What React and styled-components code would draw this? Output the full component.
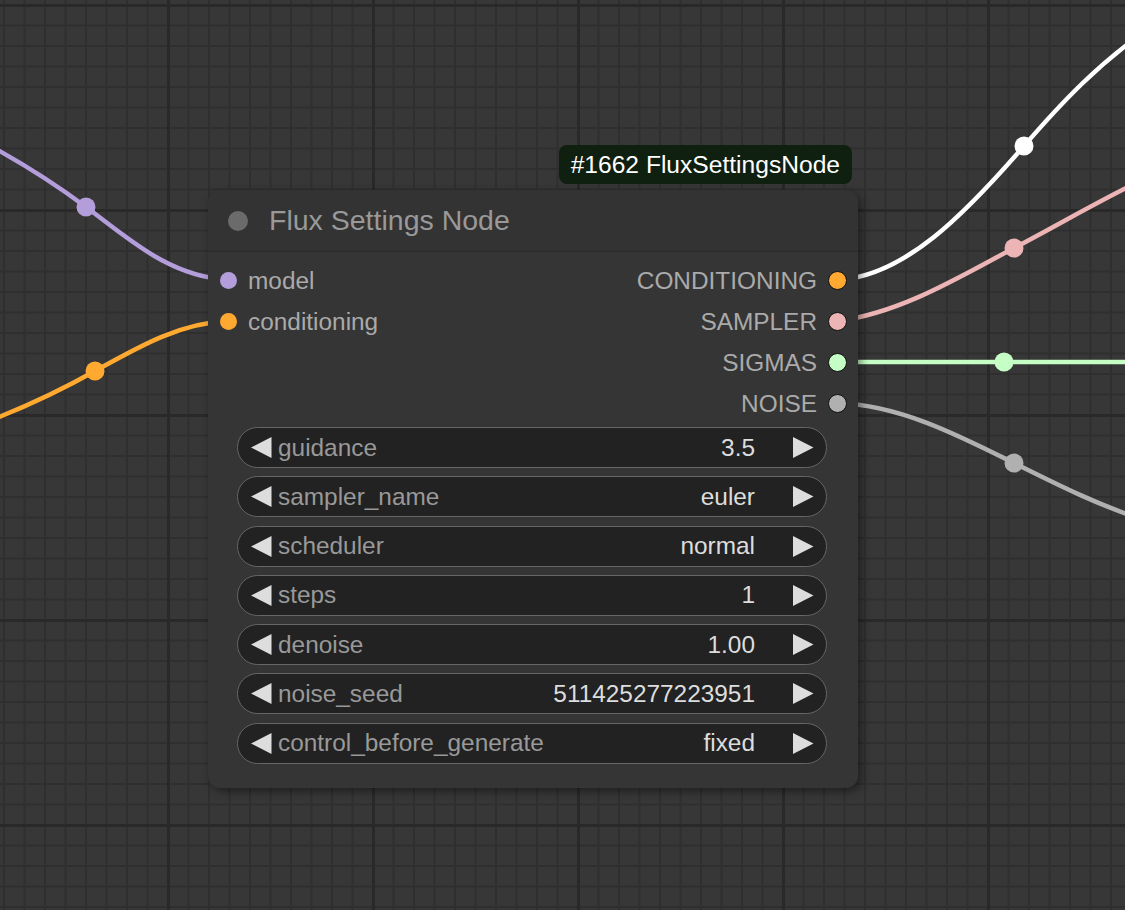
import React from "react";
import styled, { createGlobalStyle } from "styled-components";

// canvas zoom is ~2.05, so litegraph sizes are scaled by that
const inputs = [
  { name: "model", color: "#b39ddb" },
  { name: "conditioning", color: "#ffa931" },
];

const outputs = [
  { name: "CONDITIONING", color: "#ffa931" },
  { name: "SAMPLER", color: "#ecb4b4" },
  { name: "SIGMAS", color: "#c6ffc6" },
  { name: "NOISE", color: "#b0b0b0" },
];

const widgets = [
  { label: "guidance", value: "3.5" },
  { label: "sampler_name", value: "euler" },
  { label: "scheduler", value: "normal" },
  { label: "steps", value: "1" },
  { label: "denoise", value: "1.00" },
  { label: "noise_seed", value: "511425277223951" },
  { label: "control_before_generate", value: "fixed" },
];

const links = [
  { d: "M -40 130 C 10 155, 50 180, 86 207 C 128 238, 168 276, 228 280", color: "#b39ddb", dot: [86, 207] },
  { d: "M -30 428 C 20 410, 58 392, 95 371 C 140 346, 180 323, 228 321", color: "#ffa931", dot: [95, 371] },
  { d: "M 838 280 C 905 276, 965 214, 1024 146 C 1062 102, 1100 62, 1150 28", color: "#ffffff", dot: [1024, 146] },
  { d: "M 838 321 C 900 313, 958 278, 1014 248 C 1058 225, 1100 200, 1150 176", color: "#ecb4b4", dot: [1014, 248] },
  { d: "M 838 362 L 1150 362", color: "#c6ffc6", dot: [1004, 362] },
  { d: "M 838 403 C 900 405, 960 436, 1014 463 C 1060 486, 1100 506, 1150 522", color: "#b0b0b0", dot: [1014, 463] },
];

const Arrow = ({ dir }) => (
  <svg width="21" height="21" viewBox="0 0 21 21">
    {dir === "left" ? (
      <polygon points="20.5,0 0,10.5 20.5,21" fill="#dddddd" />
    ) : (
      <polygon points="0,0 20.5,10.5 0,21" fill="#dddddd" />
    )}
  </svg>
);

const App = () => {
  return (
    <>
      <GlobalStyle />
      <Canvas>
        <Links width="1125" height="910" viewBox="0 0 1125 910">
          {links.map((l, i) => (
            <g key={i}>
              <path d={l.d} stroke={l.color} strokeWidth="4.5" fill="none" />
              <circle cx={l.dot[0]} cy={l.dot[1]} r="9.5" fill={l.color} />
            </g>
          ))}
        </Links>

        <Node>
          <Badge>#1662 FluxSettingsNode</Badge>
          <TitleBar>
            <TitleDot />
            <Title>Flux Settings Node</Title>
          </TitleBar>

          <Slots>
            <SlotColumn>
              {inputs.map((s) => (
                <SlotRow key={s.name}>
                  <SlotDot color={s.color} />
                  <SlotLabel>{s.name}</SlotLabel>
                </SlotRow>
              ))}
            </SlotColumn>
            <SlotColumn $right>
              {outputs.map((s) => (
                <SlotRow key={s.name} $right>
                  <SlotLabel>{s.name}</SlotLabel>
                  <SlotDot color={s.color} $outlined />
                </SlotRow>
              ))}
            </SlotColumn>
          </Slots>

          <Widgets>
            {widgets.map((w) => (
              <Widget key={w.label}>
                <Arrow dir="left" />
                <WidgetLabel>{w.label}</WidgetLabel>
                <WidgetValue>{w.value}</WidgetValue>
                <Arrow dir="right" />
              </Widget>
            ))}
          </Widgets>
        </Node>
      </Canvas>
    </>
  );
};

const GlobalStyle = createGlobalStyle`
  html, body {
    margin: 0;
    padding: 0;
    background: #363636;
    overflow: hidden;
  }
  body {
    font-family: "Liberation Sans", Arial, sans-serif;
  }
`;

const Canvas = styled.div`
  position: relative;
  width: 1125px;
  height: 910px;
  overflow: hidden;
  background-color: #373737;
  background-image:
    linear-gradient(#292929 0 3px, transparent 3px),
    linear-gradient(90deg, #292929 0 3px, transparent 3px),
    linear-gradient(#2f2f2f 0 2px, transparent 2px),
    linear-gradient(90deg, #2f2f2f 0 2px, transparent 2px);
  background-size: 205px 205px, 205px 205px, 20.5px 20.5px, 20.5px 20.5px;
  background-position: 0 4px, 167px 0, 0 4px, 3px 0;
`;

const Links = styled.svg`
  position: absolute;
  inset: 0;
  pointer-events: none;
`;

const Node = styled.div`
  position: absolute;
  left: 208px;
  top: 190px;
  width: 650px;
  padding-bottom: 24px;
  background: #353535;
  border-radius: 12px;
  box-shadow: 3px 3px 10px rgba(0, 0, 0, 0.45);
  display: flex;
  flex-direction: column;
`;

const Badge = styled.div`
  position: absolute;
  right: 6px;
  bottom: calc(100% + 6px);
  height: 39px;
  padding: 0 12px;
  display: flex;
  align-items: center;
  background: #0f1f10;
  color: #ffffff;
  font-size: 24.6px;
  border-radius: 8px;
  white-space: nowrap;
`;

const TitleBar = styled.div`
  height: 61px;
  display: flex;
  align-items: center;
  gap: 21px;
  padding-left: 20px;
  border-bottom: 1px solid #2a2a2a;
  border-radius: 12px 12px 0 0;
  background: #333333;
`;

const TitleDot = styled.span`
  width: 20px;
  height: 20px;
  border-radius: 50%;
  background: #6b6b6b;
`;

const Title = styled.span`
  color: #999999;
  font-size: 28.5px;
`;

const Slots = styled.div`
  display: flex;
  justify-content: space-between;
  padding: 8px 11px 0 12px;
`;

const SlotColumn = styled.div`
  display: flex;
  flex-direction: column;
  align-items: ${({ $right }) => ($right ? "flex-end" : "flex-start")};
`;

const SlotRow = styled.div`
  height: 41px;
  display: flex;
  align-items: center;
  gap: ${({ $right }) => ($right ? "11px" : "11px")};
`;

const SlotDot = styled.span`
  box-sizing: border-box;
  width: ${({ $outlined }) => ($outlined ? "19px" : "17px")};
  height: ${({ $outlined }) => ($outlined ? "19px" : "17px")};
  border-radius: 50%;
  background: ${({ color }) => color};
  border: ${({ $outlined }) => ($outlined ? "1.5px solid #111" : "none")};
`;

const SlotLabel = styled.span`
  color: #aaaaaa;
  font-size: 24.4px;
`;

const Widgets = styled.div`
  display: flex;
  flex-direction: column;
  gap: 8.3px;
  padding: 0 31px 0 29px;
  margin-top: 3px;
`;

const Widget = styled.div`
  box-sizing: border-box;
  height: 41px;
  display: flex;
  align-items: center;
  padding: 0 12px 0 13px;
  background: #222222;
  border: 1.5px solid #666666;
  border-radius: 21px;
  font-size: 24.4px;
`;

const WidgetLabel = styled.span`
  color: #999999;
  margin-left: 6px;
  flex: 1;
`;

const WidgetValue = styled.span`
  color: #dddddd;
  margin-right: 38px;
`;

export default App;
